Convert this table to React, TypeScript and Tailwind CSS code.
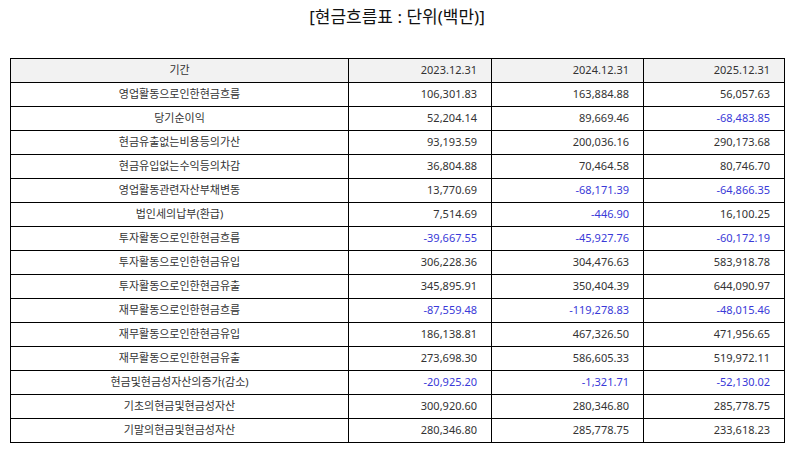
import React from 'react';

type Row = { label: string; values: string[] };

const rows: Row[] = [
  { label: '영업활동으로인한현금흐름', values: ['106,301.83', '163,884.88', '56,057.63'] },
  { label: '당기순이익', values: ['52,204.14', '89,669.46', '-68,483.85'] },
  { label: '현금유출없는비용등의가산', values: ['93,193.59', '200,036.16', '290,173.68'] },
  { label: '현금유입없는수익등의차감', values: ['36,804.88', '70,464.58', '80,746.70'] },
  { label: '영업활동관련자산부채변동', values: ['13,770.69', '-68,171.39', '-64,866.35'] },
  { label: '법인세의납부(환급)', values: ['7,514.69', '-446.90', '16,100.25'] },
  { label: '투자활동으로인한현금흐름', values: ['-39,667.55', '-45,927.76', '-60,172.19'] },
  { label: '투자활동으로인한현금유입', values: ['306,228.36', '304,476.63', '583,918.78'] },
  { label: '투자활동으로인한현금유출', values: ['345,895.91', '350,404.39', '644,090.97'] },
  { label: '재무활동으로인한현금흐름', values: ['-87,559.48', '-119,278.83', '-48,015.46'] },
  { label: '재무활동으로인한현금유입', values: ['186,138.81', '467,326.50', '471,956.65'] },
  { label: '재무활동으로인한현금유출', values: ['273,698.30', '586,605.33', '519,972.11'] },
  { label: '현금및현금성자산의증가(감소)', values: ['-20,925.20', '-1,321.71', '-52,130.02'] },
  { label: '기초의현금및현금성자산', values: ['300,920.60', '280,346.80', '285,778.75'] },
  { label: '기말의현금및현금성자산', values: ['280,346.80', '285,778.75', '233,618.23'] },
];

const periods = ['2023.12.31', '2024.12.31', '2025.12.31'];

export default function App() {
  return (
    <div
      className="w-[794px] h-[452px] bg-white text-[#333]"
      style={{ fontFamily: '"Noto Sans", "Noto Sans CJK KR", sans-serif' }}
    >
      <h1 className="h-[58px] pt-[5px] text-center text-[17px] leading-[24px] text-[#111]">
        [현금흐름표 : 단위(백만)]
      </h1>
      <table className="mx-[10px] w-[774px] border-collapse table-fixed text-[11px]">
        <colgroup>
          <col className="w-[338px]" />
          <col className="w-[143px]" />
          <col className="w-[152px]" />
          <col className="w-[141px]" />
        </colgroup>
        <thead>
          <tr className="h-[24px] bg-[#f2f2f2]">
            <th className="border border-black font-normal text-center">기간</th>
            {periods.map((p) => (
              <th key={p} className="border border-black font-normal text-right pr-[14px]">
                {p}
              </th>
            ))}
          </tr>
        </thead>
        <tbody>
          {rows.map((r) => (
            <tr key={r.label} className="h-[24px]">
              <td className="border border-black text-center">{r.label}</td>
              {r.values.map((v, i) => (
                <td
                  key={i}
                  className={
                    v.startsWith('-')
                      ? 'border border-black text-right pr-[14px] text-[#3a3ad8]'
                      : 'border border-black text-right pr-[14px]'
                  }
                >
                  {v}
                </td>
              ))}
            </tr>
          ))}
        </tbody>
      </table>
    </div>
  );
}
